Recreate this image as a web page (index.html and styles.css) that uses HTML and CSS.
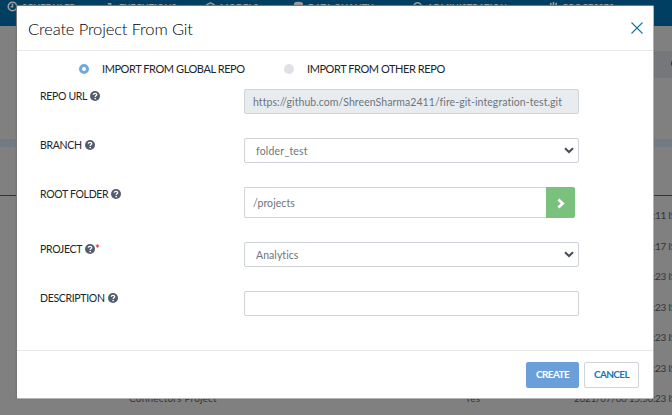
FILE: index.html
```
<!DOCTYPE html>
<html lang="en">
<head>
<meta charset="utf-8">
<title>Create Project From Git</title>
<link rel="stylesheet" href="styles.css">
</head>
<body>
<svg class="defs" aria-hidden="true">
  <symbol id="help" viewBox="0 0 20 20"><circle cx="10" cy="10" r="10" fill="#535d6b"/><path d="M6.4 7.5C6.7 5.6 8 4.7 10 4.7c2 0 3.4 1.1 3.4 2.7 0 2.2-3 2.2-3 4.4" fill="none" stroke="#fff" stroke-width="2.7"/><circle cx="10.3" cy="15" r="1.7" fill="#fff"/></symbol>
  <symbol id="chevron" viewBox="0 0 10 7"><path d="M1 1.2l4 3.8 4-3.8" fill="none" stroke="#495057" stroke-width="2.1"/></symbol>
</svg>
<div class="app">
  <nav class="nav">
    <span class="nav-item"><svg viewBox="0 0 12 12"><circle cx="6" cy="6" r="4.7"/><path d="M6 3v3.3H4"/></svg><span>SCHEDULER</span></span>
    <span class="nav-item"><svg viewBox="0 0 12 12"><path d="M4 3h4M7 3v3l3 5H4l3-5"/></svg><span>EXECUTIONS</span></span>
    <span class="nav-item"><svg viewBox="0 0 12 12"><path d="M6 2l4 2v5l-4 2-4-2V4z"/></svg><span>MODELS</span></span>
    <span class="nav-item"><svg viewBox="0 0 12 12"><ellipse cx="6" cy="3" rx="4" ry="1.4" fill="#9b9b9b"/><path d="M2 3v7h8V3"/></svg><span>DATA QUALITY</span></span>
    <span class="nav-item"><svg viewBox="0 0 12 12"><circle cx="6" cy="6" r="4"/></svg><span>ADMINISTRATION</span></span>
    <span class="nav-item"><svg viewBox="0 0 12 12"><path d="M3 5h6v5H3zM3 2v3M6 1v3M9 2v3"/></svg><span>PROCESSES</span></span>
  </nav>
  <div class="toolbar"><i></i></div>
  <div class="divider"></div>
  <div class="table-head"></div>
  <div class="table">
    <div class="tr"><span></span><span></span><span>2021/07/06 15:51:11 IST</span></div>
    <div class="tr"><span></span><span></span><span>2021/07/06 15:51:17 IST</span></div>
    <div class="tr"><span></span><span></span><span>2021/07/06 15:50:23 IST</span></div>
    <div class="tr"><span></span><span></span><span>2021/07/06 15:50:23 IST</span></div>
    <div class="tr"><span></span><span></span><span>2021/07/06 15:50:23 IST</span></div>
    <div class="tr"><span></span><span></span><span>2021/07/06 15:50:23 IST</span></div>
    <div class="tr"><span>Connectors Project</span><span>Yes</span><span>2021/07/06 15:50:23 IST</span></div>
  </div>
</div>
<section class="modal" role="dialog">
  <header class="modal-head"><h1>Create Project From Git</h1><svg class="close" viewBox="0 0 12 12"><path d="M.5.5l11 11M11.5.5l-11 11"/></svg></header>
  <div class="modal-body">
    <div class="radios">
      <span class="radio on"></span><span class="radio-label">IMPORT FROM GLOBAL REPO</span>
      <span class="radio"></span><span class="radio-label">IMPORT FROM OTHER REPO</span>
    </div>
    <div class="row"><label><span>REPO URL</span><svg class="help"><use href="#help"/></svg></label><div class="field disabled"><span>https://github.com/ShreenSharma2411/fire-git-integration-test.git</span></div></div>
    <div class="row"><label><span>BRANCH</span><svg class="help"><use href="#help"/></svg></label><div class="field select"><span class="spaced">folder_test</span><svg class="chevron"><use href="#chevron"/></svg></div></div>
    <div class="row tall"><label><span>ROOT FOLDER</span><svg class="help"><use href="#help"/></svg></label><div class="group"><div class="field"><span>/projects</span></div><div class="go"><svg viewBox="0 0 8 11"><path d="M1.4 1.4L5.7 5.5 1.4 9.6" /></svg></div></div></div>
    <div class="row"><label><span>PROJECT</span><svg class="help"><use href="#help"/></svg><b>*</b></label><div class="field select"><span>Analytics</span><svg class="chevron"><use href="#chevron"/></svg></div></div>
    <div class="row"><label><span>DESCRIPTION</span><svg class="help"><use href="#help"/></svg></label><div class="field"></div></div>
  </div>
  <footer class="modal-foot"><div class="btn primary">CREATE</div><div class="btn">CANCEL</div></footer>
</section>
</body>
</html>
```
FILE: styles.css
```
* { box-sizing: border-box; }
body { margin: 0; width: 672px; height: 415px; overflow: hidden; position: relative; background: #808080; font-family: Lato, "Open Sans", sans-serif; font-size: 11px; color: #212529; }
svg { flex: none; display: block; }
.defs { position: absolute; width: 0; height: 0; }
.app { height: 415px; overflow: hidden; }
.nav { height: 26px; background: #003f61; display: grid; grid-template-columns: 97px 101px 88px 119px 136px 1fr; padding-left: 7px; color: #a0a0a0; font-size: 9px; font-weight: 700; line-height: 14px; white-space: nowrap; }
.nav-item { display: flex; gap: 4px; }
.nav-item svg { width: 11px; height: 11px; margin-top: 1px; fill: none; stroke: #9b9b9b; stroke-width: 1.7; }
.nav-item span { letter-spacing: .15px; padding-top: 1px; }
.toolbar { margin: 25px 0 0 654px; height: 27px; background: #75777b; overflow: hidden; }
.toolbar i { display: block; margin: 8px 0 0 17px; width: 9px; height: 9px; border-radius: 50%; background: #003f61; }
.divider { margin-top: 61px; height: 8px; background: #737b82; }
.table-head { height: 49px; border-bottom: 1px solid #003f61; }
.table { padding-top: 4px; font-size: 10px; color: #343434; }
.tr { height: 30.5px; display: grid; grid-template-columns: 336px 109px 1fr; align-items: center; padding-left: 129px; white-space: nowrap; letter-spacing: .2px; }
.tr span:last-child { letter-spacing: -.3px; }
.modal { position: absolute; left: 16px; top: 5px; width: 638px; height: 394px; background: #fff; border: 1px solid #b5b5b5; border-top-color: #777; border-left-color: #777; border-radius: 2px; box-shadow: 0 0 1px #555; }
.modal-head { height: 45px; border-bottom: 1px solid #e5e7e9; display: flex; justify-content: space-between; align-items: center; padding: 0 10px 0 11px; }
h1 { margin: 2px 0 0; font-size: 16.5px; font-weight: 300; line-height: 22px; white-space: nowrap; letter-spacing: -.14px; color: #000; }
.close { width: 12px; height: 12px; margin-top: -1px; fill: none; stroke: #1678a8; stroke-width: 1.1; }
.modal-body { height: 300px; border-bottom: 1px solid #e5e7e9; padding: 12px 0 0 23px; }
.radios { height: 26px; display: flex; align-items: flex-start; padding-left: 39px; }
.radio { width: 10px; height: 10px; margin-top: 1px; border-radius: 50%; background: #dee2e6; }
.radio.on { border: 3px solid #6faade; background: #fff; }
.radio-label { line-height: 11px; width: 182px; margin-left: 13px; white-space: nowrap; letter-spacing: -.43px; }
.row { height: 49px; display: grid; grid-template-columns: 204px 335px; align-items: start; }
.row.tall { height: 55px; }
label { display: flex; align-items: center; height: 14px; white-space: nowrap; font-size: 10.5px; letter-spacing: -.32px; }
.help { width: 10px; height: 10px; margin-left: 3px; }
label b { color: #e02b38; font-weight: 700; }
.field { height: 25px; border: 1px solid #ced4da; border-radius: 2px; background: #fff; padding: 0 8px; display: flex; align-items: center; color: #6c757d; font-size: 10.5px; white-space: nowrap; letter-spacing: .06px; }
.disabled { background: #e9ecef; }
.select { padding: 0 4px 0 11px; justify-content: space-between; }
.spaced { letter-spacing: .2px; }
.chevron { width: 10px; height: 7px; }
.group { display: flex; width: 331px; }
.group .field { flex: 1; height: 31px; border-right: 0; border-radius: 2px 0 0 2px; }
.go { width: 29px; height: 31px; background: #7bc17e; border-radius: 0 2px 2px 0; display: flex; align-items: center; justify-content: center; }
.go svg { width: 8px; height: 11px; fill: none; stroke: #fff; stroke-width: 2.7; margin-top: 2px; }
.modal-foot { display: flex; justify-content: flex-end; gap: 5px; padding: 11px 14px 0 0; }
.btn { width: 55px; height: 26px; border: 1px solid #ced4da; border-radius: 2px; color: #1678b0; font-size: 10px; font-weight: 700; letter-spacing: -.6px; padding-bottom: 2px; display: flex; align-items: center; justify-content: center; }
.primary { width: 53px; background: #6b9fd9; border-color: #6b9fd9; color: #fff; }
```
